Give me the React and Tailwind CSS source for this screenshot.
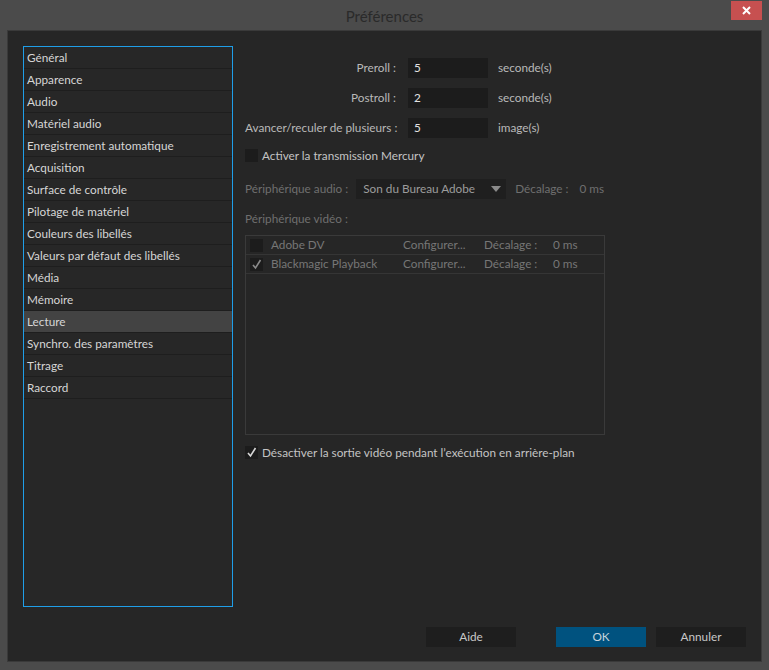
import React from 'react';

const sections = [
    'Général',
    'Apparence',
    'Audio',
    'Matériel audio',
    'Enregistrement automatique',
    'Acquisition',
    'Surface de contrôle',
    'Pilotage de matériel',
    'Couleurs des libellés',
    'Valeurs par défaut des libellés',
    'Média',
    'Mémoire',
    'Lecture',
    'Synchro. des paramètres',
    'Titrage',
    'Raccord',
];

const devices = [
    { name: 'Adobe DV', checked: false },
    { name: 'Blackmagic Playback', checked: true },
];

const Check = ({ color = '#d8d8d8' }) => (
    <svg width="13" height="13" viewBox="0 0 13 13" className="block">
        <polyline points="3,7 5.5,10 10.5,2" fill="none" stroke={ color } strokeWidth="1.6" />
    </svg>
);

const CheckBox = ({ checked, color }) => (
    <div className="w-[13px] h-[13px] bg-[#1c1c1c] flex items-center justify-center shrink-0">
        { checked && <Check color={ color } /> }
    </div>
);

const NumberRow = ({ label, value, unit }) => (
    <div className="flex items-center h-[20px] whitespace-nowrap">
        <span className="w-[152px] text-right pr-[1px] text-[#b9b9b9]">{ label }</span>
        <div className="ml-[11px] w-[80px] h-[20px] bg-[#1c1c1c] flex items-center pl-[6px] text-[#e2e2e2]">
            { value }
        </div>
        <span className="ml-[10px] text-[#b9b9b9]">{ unit }</span>
    </div>
);

export default function App() {
    return (
        <div
            className="w-[769px] h-[670px] bg-[#4b4b4b] flex flex-col text-[11.75px] leading-none"
            style={ { fontFamily: 'Lato, "Noto Sans", sans-serif' } }
        >
            {/* title bar */}
            <div className="relative h-[30px] flex items-center justify-center shrink-0">
                <span className="text-[15px] text-[#2a2a2a] mt-[2px]">Préférences</span>
                <div className="absolute right-[7px] top-[1px] w-[31px] h-[19px] bg-[#c75050] flex items-center justify-center">
                    <svg width="9" height="9" viewBox="0 0 9 9">
                        <path d="M1 1 L8 8 M8 1 L1 8" stroke="#fff" strokeWidth="2" />
                    </svg>
                </div>
            </div>

            {/* body */}
            <div className="mx-[7px] border border-[#3a3a3a] bg-[#262626] flex flex-col h-[632px]">
                <div className="flex pt-[15px] pl-[15px]">
                    {/* section list */}
                    <div className="w-[210px] h-[561px] border border-[#1f9ee8] bg-[#272727] shrink-0">
                        { sections.map((s) => (
                            <div
                                key={ s }
                                className={ `h-[22px] border-b border-[#1e1e1e] flex items-center pl-[3px] pt-[1px] text-[#d6d6d6] ${s === 'Lecture' ? 'bg-[#434343]' : ''}` }
                            >
                                { s }
                            </div>
                        )) }
                    </div>

                    {/* settings */}
                    <div className="ml-[12px] pt-[12px] flex flex-col whitespace-nowrap">
                        <div className="flex flex-col gap-[10px]">
                            <NumberRow label="Preroll :" value="5" unit="seconde(s)" />
                            <NumberRow label="Postroll :" value="2" unit="seconde(s)" />
                            <NumberRow label="Avancer/reculer de plusieurs :" value="5" unit="image(s)" />
                        </div>

                        <div className="flex items-center gap-[4px] mt-[11px] h-[13px]">
                            <CheckBox checked={ false } />
                            <span className="text-[#c4c4c4] pt-[1px]">Activer la transmission Mercury</span>
                        </div>

                        <div className="flex items-center mt-[17px] h-[20px] text-[#6f6f6f]">
                            <span>Périphérique audio :</span>
                            <div className="ml-[8px] w-[150px] h-[20px] bg-[#1f1f1f] flex items-center justify-between pl-[7px] pr-[5px]">
                                <span className="text-[#9c9c9c]">Son du Bureau Adobe</span>
                                <svg width="10" height="6" viewBox="0 0 10 6">
                                    <polygon points="0,0 10,0 5,6" fill="#8a8a8a" />
                                </svg>
                            </div>
                            <span className="ml-[9px]">Décalage :</span>
                            <span className="ml-[11px]">0 ms</span>
                        </div>

                        <div className="mt-[13px] text-[#6f6f6f] h-[12px] flex items-center pt-[1px]">Périphérique vidéo :</div>

                        <div className="mt-[11px] w-[360px] h-[200px] border border-[#3a3a3a]">
                            { devices.map((d) => (
                                <div key={ d.name } className="h-[19px] border-b border-[#353535] flex items-center pl-[4px] text-[#767676]">
                                    <CheckBox checked={ d.checked } color="#8a8a8a" />
                                    <span className="ml-[8px] w-[132px]">{ d.name }</span>
                                    <span className="w-[81px]">Configurer...</span>
                                    <span className="w-[69px]">Décalage :</span>
                                    <span>0 ms</span>
                                </div>
                            )) }
                        </div>

                        <div className="flex items-center gap-[4px] mt-[11px] h-[13px]">
                            <CheckBox checked />
                            <span className="text-[#c4c4c4] pt-[1px]">Désactiver la sortie vidéo pendant l’exécution en arrière-plan</span>
                        </div>
                    </div>
                </div>

                {/* buttons */}
                <div className="flex justify-end pr-[15px] mt-[20px]">
                    <button className="w-[90px] h-[20px] bg-[#1e1e1e] text-[#c8c8c8]">Aide</button>
                    <button className="ml-[40px] w-[90px] h-[20px] bg-[#00527f] text-[#c8d4dc]">OK</button>
                    <button className="ml-[10px] w-[90px] h-[20px] bg-[#1e1e1e] text-[#c8c8c8]">Annuler</button>
                </div>
            </div>
        </div>
    );
}
